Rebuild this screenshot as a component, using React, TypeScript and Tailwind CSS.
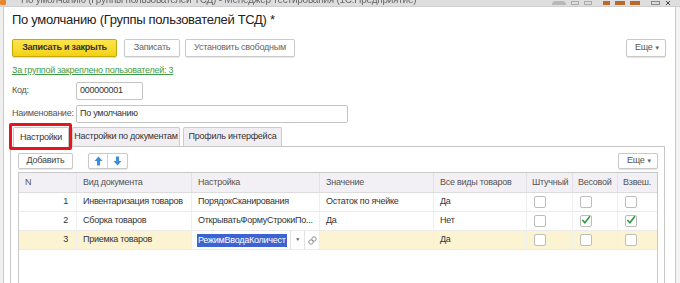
import React from 'react';

type Row = {
  n: number;
  doc: string;
  setting: string;
  value: string;
  all: string;
  piece: boolean;
  weight: boolean;
  weighed: boolean;
  editing?: boolean;
};

const ROWS: Row[] = [
  { n: 1, doc: 'Инвентаризация товаров', setting: 'ПорядокСканирования', value: 'Остаток по ячейке', all: 'Да', piece: false, weight: false, weighed: false },
  { n: 2, doc: 'Сборка товаров', setting: 'ОткрыватьФормуСтрокиПо...', value: 'Да', all: 'Нет', piece: false, weight: true, weighed: true },
  { n: 3, doc: 'Приемка товаров', setting: 'РежимВводаКоличест', value: '', all: 'Да', piece: false, weight: false, weighed: false, editing: true },
];

const COLS = 'grid grid-cols-[58px_115px_128px_114px_93px_46px_45px_41px]';

const Checkbox = ({ checked = false }: { checked?: boolean }) => (
  <div className="w-[12px] h-[12px] rounded-[2px] border border-[#bdbdbd] bg-white flex items-center justify-center">
    {checked && (
      <svg width="11" height="10" viewBox="0 0 11 10" className="-mt-[2px]">
        <path d="M1.5 5 L4.3 8 L9.8 1" fill="none" stroke="#2e9b3e" strokeWidth="1.8" />
      </svg>
    )}
  </div>
);

const MoreButton = () => (
  <button className="w-full h-full pl-[8px] pr-[5px] flex items-center justify-between bg-white border border-[#c9c9c9] rounded-[2px] shadow-[0_1px_1px_rgba(0,0,0,0.12)] text-[#555]">
    <span>Еще</span>
    <span className="text-[6px] text-[#666]">▼</span>
  </button>
);

const Arrow = ({ down = false }: { down?: boolean }) => (
  <svg width="9" height="10" viewBox="0 0 9 10" className={down ? 'rotate-180' : ''}>
    <path d="M4.5 0.5 L8.5 5 L6 5 L6 9.5 L3 9.5 L3 5 L0.5 5 Z" fill="#3c8ddc" />
  </svg>
);

const App = () => {
  return (
    <div className="w-[680px] h-[283px] overflow-hidden flex flex-col bg-[#f2f2f2] font-['Liberation_Sans',Arial,sans-serif] text-[9px] tracking-[-0.25px] text-[#333]">
      {/* window caption, mostly cut off */}
      <div className="h-[7px] shrink-0 overflow-hidden flex items-end bg-[#dedede] border-b border-[#cfcfcf]">
        <div className="w-[6px] h-[5px] mb-[1px] shrink-0 rounded-[1px] bg-[#e8842a]" />
        <div className="ml-[15px] h-[6px] overflow-hidden shrink-0">
          <div className="-mt-[6px] leading-[12px] text-[10px] text-[#666] whitespace-nowrap blur-[0.4px]">
            По умолчанию (Группы пользователей ТСД) - Менеджер тестирования (1С:Предприятие)
          </div>
        </div>
        <div className="ml-auto mr-[8px] mb-[1px] flex items-end gap-[5px] shrink-0">
          <div className="w-[14px] h-[4px] rounded-t-full bg-[#b8b8b8]" />
          <div className="w-[8px] h-[4px] border border-[#aaa]" />
          <div className="w-[8px] h-[4px] border border-[#aaa] mr-[6px]" />
          <div className="w-[7px] h-[4px] bg-[#b86a2a]" />
          <div className="w-[10px] h-[4px] bg-[#b86a2a]" />
          <div className="w-[10px] h-[4px] bg-[#b86a2a] mr-[6px]" />
          <div className="w-[9px] h-[4px] border border-[#888]" />
          <svg width="7" height="4" viewBox="0 0 7 4">
            <path d="M1 0 L5 4 M5 0 L1 4" stroke="#444" strokeWidth="1" />
          </svg>
        </div>
      </div>

      <div className="flex flex-1 min-h-0">
        <div className="w-[3px] bg-[#efefef]" />
        <div className="w-[673px] bg-white border-x border-[#cbcbcb] pl-[8px] pr-[9px] flex flex-col min-h-0">
          {/* title */}
          <div className="pt-[4px] text-[13px] tracking-[-0.3px] leading-[18px] text-[#222] whitespace-nowrap">
            По умолчанию (Группы пользователей ТСД) *
          </div>

          {/* command bar */}
          <div className="mt-[10px] h-[18px] flex items-stretch">
            <button className="w-[105px] rounded-[2px] border border-[#c7a906] bg-gradient-to-b from-[#fbe54a] to-[#f2d20c] font-bold text-[#333] shadow-[0_1px_1px_rgba(0,0,0,0.15)]">
              Записать и закрыть
            </button>
            <button className="ml-[7px] w-[56px] rounded-[2px] border border-[#cacaca] bg-white text-[#666] shadow-[0_1px_1px_rgba(0,0,0,0.1)]">
              Записать
            </button>
            <button className="ml-[5px] w-[110px] rounded-[2px] border border-[#cacaca] bg-white text-[#666] shadow-[0_1px_1px_rgba(0,0,0,0.1)]">
              Установить свободным
            </button>
            <div className="ml-auto w-[40px]">
              <MoreButton />
            </div>
          </div>

          {/* link */}
          <div className="mt-[7px] leading-[13px]">
            <span className="text-[#3f9c45] underline underline-offset-[1px]">За группой закреплено пользователей: 3</span>
          </div>

          {/* fields */}
          <div className="mt-[5px] h-[18px] flex items-center">
            <div className="w-[64px] text-[#555]">Код:</div>
            <div className="w-[67px] h-full border border-[#c4c4c4] rounded-[2px] px-[3px] flex items-center text-[#333]">000000001</div>
          </div>
          <div className="mt-[5px] h-[18px] flex items-center">
            <div className="w-[64px] text-[#555]">Наименование:</div>
            <div className="w-[272px] h-full border border-[#c4c4c4] rounded-[2px] px-[3px] flex items-center text-[#333]">По умолчанию</div>
          </div>

          {/* tabs */}
          <div className="mt-[4px] -ml-[2px] mr-[1px] flex flex-col flex-1 min-h-0">
            <div className="h-[19px] flex items-end pl-[3px] relative">
              <div className="w-[56px] h-[20px] bg-white border-x border-t border-[#c6c6c6] rounded-t-[2px] flex items-center justify-center text-[#333] relative z-10 -mb-px">
                Настройки
              </div>
              <div className="ml-[3px] w-[108px] h-[19px] bg-[#f1eef3] border-x border-t border-[#cbcbcb] rounded-t-[2px] flex items-center justify-center text-[#333] whitespace-nowrap">
                Настройки по документам
              </div>
              <div className="ml-[3px] w-[99px] h-[19px] bg-[#f1eef3] border-x border-t border-[#cbcbcb] rounded-t-[2px] flex items-center justify-center text-[#333] whitespace-nowrap">
                Профиль интерфейса
              </div>
              {/* highlight annotation around the active tab */}
              <div className="absolute left-[-1px] top-[-4px] w-[63px] h-[27px] border-[3px] border-[#e8141c] rounded-[2px] z-20" />
            </div>

            <div className="flex-1 min-h-0 border-l border-r border-t border-[#c6c6c6] pl-[7px] pr-[6px] pt-[6px] flex flex-col">
              {/* table toolbar */}
              <div className="h-[16px] flex items-stretch">
                <button className="w-[55px] rounded-[2px] border border-[#c9c9c9] bg-white text-[#444] shadow-[0_1px_1px_rgba(0,0,0,0.1)]">
                  Добавить
                </button>
                <div className="ml-[15px] flex rounded-[2px] border border-[#c9c9c9] bg-white shadow-[0_1px_1px_rgba(0,0,0,0.1)]">
                  <div className="w-[19px] flex items-center justify-center border-r border-[#d4d4d4]">
                    <Arrow />
                  </div>
                  <div className="w-[19px] flex items-center justify-center">
                    <Arrow down />
                  </div>
                </div>
                <div className="ml-auto w-[40px]">
                  <MoreButton />
                </div>
              </div>

              {/* table */}
              <div className="mt-[3px] flex-1 border-x border-t border-[#c9c9c9]">
                <div className={`${COLS} h-[20px] bg-[#f2f0f4] border-b border-[#dcdcdc] text-[#555] whitespace-nowrap`}>
                  <div className="px-[6px] flex items-center border-r border-[#e4e1e7]">N</div>
                  <div className="px-[6px] flex items-center border-r border-[#e4e1e7]">Вид документа</div>
                  <div className="px-[6px] flex items-center border-r border-[#e4e1e7]">Настройка</div>
                  <div className="px-[6px] flex items-center border-r border-[#e4e1e7]">Значение</div>
                  <div className="px-[6px] flex items-center border-r border-[#e4e1e7]">Все виды товаров</div>
                  <div className="px-[5px] flex items-center border-r border-[#e4e1e7]">Штучный</div>
                  <div className="px-[5px] flex items-center border-r border-[#e4e1e7]">Весовой</div>
                  <div className="px-[5px] flex items-center">Взвеш.</div>
                </div>
                {ROWS.map((r) => (
                  <div
                    key={r.n}
                    className={`${COLS} h-[19px] border-b border-[#ebebeb] whitespace-nowrap ${r.editing ? 'bg-[#fcf3d2]' : 'bg-white'}`}
                  >
                    <div className="pr-[8px] flex items-center justify-end border-r border-[#efefef]">{r.n}</div>
                    <div className="px-[6px] flex items-center border-r border-[#efefef] overflow-hidden">{r.doc}</div>
                    {r.editing ? (
                      <div className="flex items-stretch bg-white border-r border-[#efefef] overflow-hidden">
                        <div className="flex-1 min-w-0 pl-[5px] flex items-center overflow-hidden">
                          <span className="bg-[#3c63cf] text-white px-[1px] leading-[13px]">{r.setting}</span>
                        </div>
                        <div className="w-[14px] flex items-center justify-center border-l border-[#e2e2e2] text-[5px] text-[#555]">▼</div>
                        <div className="w-[15px] flex items-center justify-center border-l border-[#e2e2e2]">
                          <svg width="9" height="9" viewBox="0 0 9 9">
                            <circle cx="3" cy="6" r="2.2" fill="none" stroke="#888" strokeWidth="0.9" />
                            <circle cx="6" cy="3" r="2.2" fill="none" stroke="#888" strokeWidth="0.9" />
                          </svg>
                        </div>
                      </div>
                    ) : (
                      <div className="px-[6px] flex items-center border-r border-[#efefef] overflow-hidden">{r.setting}</div>
                    )}
                    <div className="px-[6px] flex items-center border-r border-[#efefef] overflow-hidden">{r.value}</div>
                    <div className="px-[6px] flex items-center border-r border-[#efefef]">{r.all}</div>
                    <div className="pl-[7px] flex items-center border-r border-[#efefef]"><Checkbox checked={r.piece} /></div>
                    <div className="pl-[7px] flex items-center border-r border-[#efefef]"><Checkbox checked={r.weight} /></div>
                    <div className="pl-[7px] flex items-center"><Checkbox checked={r.weighed} /></div>
                  </div>
                ))}
              </div>
            </div>
          </div>
        </div>
        <div className="flex-1 bg-[#f3f3f3]" />
      </div>
    </div>
  );
};

export default App;
